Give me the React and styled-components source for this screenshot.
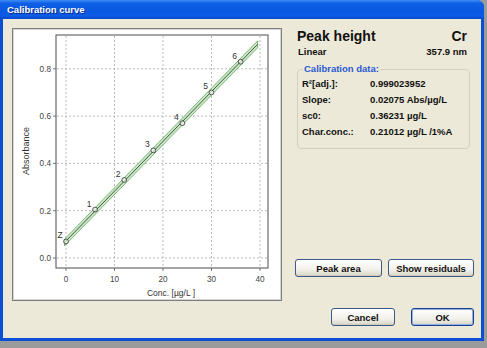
import React from "react";
import styled, { createGlobalStyle } from "styled-components";

const GlobalStyle = createGlobalStyle`
  html, body {
    margin: 0;
    padding: 0;
    background: #9b9b9b;
  }
  body {
    font-family: "Liberation Sans", Arial, sans-serif;
  }
`;

const Window = styled.div`
  width: 484px;
  height: 341px;
  display: flex;
  flex-direction: column;
  background: #0a4fd4;
  border-radius: 0 7px 0 0;
  overflow: hidden;
`;

const TitleBar = styled.div`
  height: 19px;
  flex: none;
  display: flex;
  align-items: center;
  padding-left: 7px;
  color: #fff;
  font-size: 9.5px;
  font-weight: bold;
  text-shadow: 1px 1px 0 #0a2a8a;
  background: linear-gradient(
    to bottom,
    #3d8cf5 0%,
    #0d5fe6 18%,
    #0a58e0 60%,
    #0b5ce8 85%,
    #0847c9 100%
  );
`;

const Body = styled.div`
  flex: 1;
  display: flex;
  margin: 0 3px 3px 3px;
  padding: 9px 6px 0 9px;
  background: #ece9d8;
`;

const ChartPanel = styled.div`
  width: 270px;
  height: 273px;
  box-sizing: border-box;
  background: #fff;
  border: 1px solid #7d7d7d;
  box-shadow: inset 0 0 0 1px #d6d6d6;
`;

const Side = styled.div`
  width: 180px;
  margin-left: 13px;
  display: flex;
  flex-direction: column;
  padding-bottom: 12px;
`;

const Row = styled.div`
  display: flex;
  justify-content: space-between;
  align-items: baseline;
  padding: 0 8px 0 ${(p) => p.$indent || 2}px;
  margin-top: ${(p) => p.$top || 0}px;
  color: #111;
  font-weight: bold;
  font-size: ${(p) => p.$size || 9.5}px;
  line-height: ${(p) => p.$line || 12}px;
`;

const Group = styled.fieldset`
  margin: 5px 5px 0 2px;
  padding: 1px 0 8px 4px;
  border: 1px solid #d3d0bd;
  border-radius: 4px;
`;

const Legend = styled.legend`
  padding: 0 1px;
  margin-left: 1px;
  color: #2a5ad2;
  font-weight: bold;
  font-size: 9.5px;
  line-height: 12px;
`;

const DataRow = styled.div`
  display: grid;
  grid-template-columns: 68px 1fr;
  font-size: 9.5px;
  font-weight: bold;
  line-height: 16px;
  color: #111;
`;

const ButtonRow = styled.div`
  display: flex;
  justify-content: ${(p) => p.$justify || "flex-start"};
  gap: ${(p) => p.$gap || 6}px;
  margin-top: ${(p) => p.$top || "auto"};
  padding-right: ${(p) => p.$right || 0}px;
`;

const Button = styled.button`
  width: ${(p) => p.$w}px;
  height: 18px;
  padding: 0;
  font-family: "Liberation Sans", Arial, sans-serif;
  font-size: 9.5px;
  font-weight: bold;
  color: #111;
  border: 1px solid ${(p) => (p.$default ? "#1d3f8f" : "#3b5a8a")};
  border-radius: 3px;
  background: linear-gradient(to bottom, #ffffff, #f2f1ea 60%, #d9d6c6);
  box-shadow: ${(p) =>
    p.$default ? "inset 0 0 0 1px #8fb0e6" : "inset 0 -1px 0 #d0ccb8"};
  cursor: pointer;
`;

const X = (c) => 66 + c * 4.85;
const Y = (a) => 258 - a * 236.5;

const points = [
  ["Z", 0, 0.07],
  ["1", 6, 0.205],
  ["2", 12, 0.33],
  ["3", 18, 0.455],
  ["4", 24, 0.57],
  ["5", 30, 0.7],
  ["6", 36, 0.83],
];

const fit = (c) => 0.072 + 0.02105 * c;

const CalibrationChart = () => {
  const c0 = -0.3;
  const c1 = 39.5;
  const band = (d) => (c) => Y(fit(c)) + d * (2.6 + Math.abs(c - 18) * 0.04);
  const up = band(-1);
  const lo = band(1);
  const poly = [
    [X(c0), up(c0)],
    [X(c1), up(c1)],
    [X(c1), lo(c1)],
    [X(c0), lo(c0)],
  ]
    .map((p) => p.join(","))
    .join(" ");

  return (
    <svg width="268" height="271" style={{ display: "block" }}>
      <g transform="translate(-13,-29)" fontFamily="Liberation Sans, Arial, sans-serif">
        {[0, 10, 20, 30, 40].map((c) => (
          <g key={c}>
            <line x1={X(c)} x2={X(c)} y1={36} y2={267} stroke="#a8a8a8" strokeWidth="0.8" strokeDasharray="2 2" />
            <line x1={X(c)} x2={X(c)} y1={268} y2={271} stroke="#555" strokeWidth="0.8" />
            <text x={X(c)} y={282} fontSize="8.2" fill="#444" textAnchor="middle">{c}</text>
          </g>
        ))}
        {[0, 0.2, 0.4, 0.6, 0.8].map((a) => (
          <g key={a}>
            <line x1={57} x2={267} y1={Y(a)} y2={Y(a)} stroke="#a8a8a8" strokeWidth="0.8" strokeDasharray="2 2" />
            <line x1={53} x2={56} y1={Y(a)} y2={Y(a)} stroke="#555" strokeWidth="0.8" />
            <text x={51} y={Y(a) + 3} fontSize="8.2" fill="#444" textAnchor="end">{a.toFixed(1)}</text>
          </g>
        ))}
        <rect x={56} y={35} width={212} height={233} fill="none" stroke="#6a6a6a" strokeWidth="1.2" />
        <polygon points={poly} fill="#bfe3b8" fillOpacity="0.8" stroke="#5aa85a" strokeWidth="0.8" />
        <line x1={X(c0)} y1={Y(fit(c0))} x2={X(c1)} y2={Y(fit(c1))} stroke="#2a2a2a" strokeWidth="0.8" />
        {points.map(([n, c, a]) => (
          <g key={n}>
            <circle cx={X(c)} cy={Y(a)} r="2.4" fill="#fff" fillOpacity="0.6" stroke="#333" strokeWidth="0.8" />
            <text x={X(c) - 6} y={Y(a) - 3} fontSize="8.5" fill="#333" textAnchor="middle">{n}</text>
          </g>
        ))}
        <text x={171} y={296} fontSize="8.5" fill="#333" textAnchor="middle">Conc. [µg/L ]</text>
        <text transform="translate(29,151) rotate(-90)" fontSize="9" fill="#333" textAnchor="middle">Absorbance</text>
      </g>
    </svg>
  );
};

const data = [
  ["R²[adj.]:", "0.999023952"],
  ["Slope:", "0.02075 Abs/µg/L"],
  ["sc0:", "0.36231 µg/L"],
  ["Char.conc.:", "0.21012 µg/L /1%A"],
];

export default function App() {
  return (
    <>
      <GlobalStyle />
      <Window>
        <TitleBar>Calibration curve</TitleBar>
        <Body>
          <ChartPanel>
            <CalibrationChart />
          </ChartPanel>
          <Side>
            <Row $size={14} $line={16}>
              <span>Peak height</span>
              <span>Cr</span>
            </Row>
            <Row $top={2} $indent={3}>
              <span>Linear</span>
              <span>357.9 nm</span>
            </Row>
            <Group>
              <Legend>Calibration data:</Legend>
              {data.map(([k, v]) => (
                <DataRow key={k}>
                  <span>{k}</span>
                  <span>{v}</span>
                </DataRow>
              ))}
            </Group>
            <ButtonRow>
              <Button $w={87}>Peak area</Button>
              <Button $w={86}>Show residuals</Button>
            </ButtonRow>
            <ButtonRow $justify="flex-end" $gap={16} $top="31px" $right={1}>
              <Button $w={64}>Cancel</Button>
              <Button $w={63} $default>OK</Button>
            </ButtonRow>
          </Side>
        </Body>
      </Window>
    </>
  );
}
